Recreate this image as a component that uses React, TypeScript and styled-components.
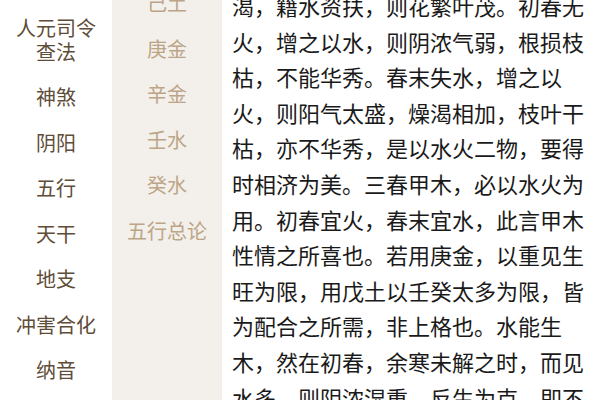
import React from "react";
import styled, { createGlobalStyle } from "styled-components";

const Global = createGlobalStyle`
  html, body {
    margin: 0;
    padding: 0;
    background: #ffffff;
    overflow: hidden;
  }
  body {
    font-family: "Noto Sans CJK SC", "Noto Sans", sans-serif;
  }
`;

const Page = styled.div`
  display: flex;
  width: 600px;
  height: 400px;
  overflow: hidden;
  background: #ffffff;
`;

const MainNav = styled.nav`
  flex: 0 0 112px;
  display: flex;
  flex-direction: column;
  padding-top: 5px;
  background: #ffffff;
`;

const SubNav = styled.nav`
  flex: 0 0 110px;
  display: flex;
  flex-direction: column;
  background: #f3f0eb;
  overflow: hidden;
`;

const SubList = styled.div`
  display: flex;
  flex-direction: column;
  margin-top: -247px;
`;

const NavItem = styled.div<{ $sub?: boolean }>`
  padding: 10.75px 6px;
  text-align: center;
  font-size: 20px;
  line-height: 24px;
  color: ${(p) => (p.$sub ? "#bca587" : "#5e4d38")};
`;

const NavLine = styled.span`
  display: block;
`;

const Content = styled.main`
  flex: 1;
  padding: 0 10px 0 10px;
  overflow: hidden;
`;

const Paragraph = styled.p`
  margin: -12px 0 0 0;
  font-size: 22px;
  line-height: 35.6px;
  color: #1a1a1a;
`;

const mainItems = ["人元司令\n查法", "神煞", "阴阳", "五行", "天干", "地支", "冲害合化", "纳音"];
const subItems = ["甲木", "乙木", "丙火", "丁火", "戊土", "己土", "庚金", "辛金", "壬水", "癸水", "五行总论"];

const text =
  "渴，籍水资扶，则花繁叶茂。初春无火，增之以水，则阴浓气弱，根损枝枯，不能华秀。春末失水，增之以火，则阳气太盛，燥渴相加，枝叶干枯，亦不华秀，是以水火二物，要得时相济为美。三春甲木，必以水火为用。初春宜火，春末宜水，此言甲木性情之所喜也。若用庚金，以重见生旺为限，用戊土以壬癸太多为限，皆为配合之所需，非上格也。水能生木，然在初春，余寒未解之时，而见水多，则阴浓湿重，反生为克，即不能发荣矣。";

export default function App() {
  return (
    <>
      <Global />
      <Page>
        <MainNav>
          {mainItems.map((t) => (
            <NavItem key={t}>
              {t.split("\n").map((line) => (
                <NavLine key={line}>{line}</NavLine>
              ))}
            </NavItem>
          ))}
        </MainNav>
        <SubNav>
          <SubList>
            {subItems.map((t) => (
              <NavItem key={t} $sub>
                {t}
              </NavItem>
            ))}
          </SubList>
        </SubNav>
        <Content>
          <Paragraph>{text}</Paragraph>
        </Content>
      </Page>
    </>
  );
}
